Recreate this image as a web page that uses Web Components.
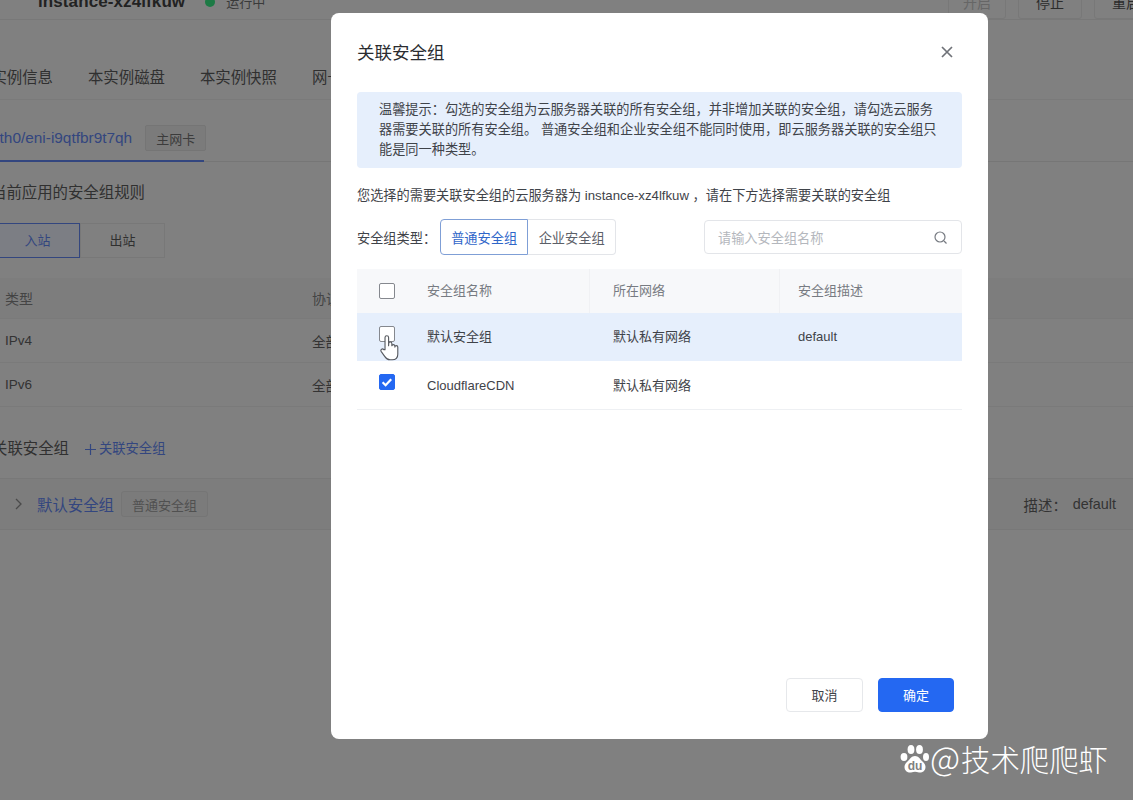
<!DOCTYPE html>
<html lang="zh">
<head>
<meta charset="utf-8">
<title>关联安全组</title>
<style>
  html, body { margin: 0; height: 100%; }
  body { width: 1133px; height: 800px; overflow: hidden; background: #808080; position: relative;
    font-family: "Liberation Sans", "Noto Sans CJK SC", sans-serif; }
</style>
</head>
<body>
<console-page></console-page>
<sg-dialog title="关联安全组">
  <sg-notice>温馨提示&#xFF1A;勾选的安全组为云服务器关联的所有安全组&#xFF0C;并非增加关联的安全组&#xFF0C;请勾选云服务器需要关联的所有安全组。 普通安全组和企业安全组不能同时使用&#xFF0C;即云服务器关联的安全组只能是同一种类型。</sg-notice>
  <sg-filter></sg-filter>
  <sg-table></sg-table>
  <sg-button slot="footer">取消</sg-button>
  <sg-button slot="footer" primary>确定</sg-button>
</sg-dialog>
<water-mark></water-mark>

<script>
const FONT = '"Liberation Sans", "Noto Sans CJK SC", sans-serif';

// dimmed page behind the dialog
class ConsolePage extends HTMLElement {
  constructor() {
    super();
    this.attachShadow({ mode: 'open' });
    this.shadowRoot.innerHTML = `
      <style>
        :host { display: block; width: 1133px; height: 800px; overflow: hidden; font-family: ${FONT}; font-size: 15.4px; color: #303030; }
        .head { display: flex; align-items: center; height: 36px; margin-top: -16px; padding-left: 38px; border-bottom: 1px solid #787878; box-sizing: border-box; }
        .name { font-size: 17px; font-weight: 700; color: #222; letter-spacing: .1px; }
        .dot { width: 10px; height: 10px; border-radius: 50%; background: #1d7a45; margin-left: 20px; }
        .state { margin-left: 11px; font-size: 13px; color: #3a3a3a; }
        .ops { margin-left: auto; display: flex; gap: 12px; margin-right: -25px; }
        .ops span { width: 64px; height: 34px; box-sizing: border-box; border: 1px solid #787878; border-radius: 3px; display: flex; align-items: center; justify-content: center; font-size: 14px; color: #2b2b2b; }
        .ops span.off { width: 58px; color: #666; }
        .tabs { display: flex; gap: 35px; margin: 44px 0 0 -24px; padding-top: 1px; height: 36px; border-bottom: 1px solid #7a7a7a; box-sizing: border-box; white-space: nowrap; }
        .sub { display: flex; align-items: center; height: 62px; margin-left: -9px; box-sizing: border-box; border-bottom: 1px solid #767676; padding-top: 16px; }
        .sub .on { display: flex; align-items: center; gap: 13px; height: 100%; border-bottom: 2px solid #33467f; box-sizing: border-box; margin-bottom: -1px; width: 213px; }
        .eth { white-space: nowrap; font-size: 15.4px; }
        .link { color: #33467f; }
        .tag { border: 1px solid #757575; background: #7b7b7b; border-radius: 2px; font-size: 13px; display: inline-flex; align-items: center; justify-content: center; color: #3c3c3c; flex: none; }
        .sub .tag { width: 59px; height: 24px; }
        .title { margin: 20px 0 0 -9px; line-height: 22px; }
        .dir { display: flex; margin: 19px 0 0 -5px; font-size: 13px; }
        .dir span { width: 85px; height: 35px; padding-bottom: 2px; box-sizing: border-box; display: flex; align-items: center; justify-content: center; border: 1px solid #787878; }
        .dir .on { border: 1px solid #33467f; color: #33467f; background: #7c7e84; }
        .row { display: grid; grid-template-columns: 312px 1fr; padding-left: 5px; box-sizing: border-box; align-items: center; height: 44px; border-bottom: 1px solid #7a7a7a; font-size: 13.5px; color: #333; }
        .row.th { height: 41px; margin-top: 20px; background: #7d7d7d; color: #444; font-size: 14px; }
        .row span:nth-child(2) { margin-left: -5px; }
        .sec { display: flex; align-items: center; gap: 16px; margin: 29px 0 0 -8px; line-height: 26px; }
        .sec .link { display: flex; align-items: center; gap: 3px; font-size: 13.3px; }
        .sec svg { width: 11px; height: 11px; }
        .group { display: flex; align-items: center; height: 52px; margin-top: 16px; padding: 0 17px 0 14px; background: #7d7d7d; border-top: 1px solid #787878; border-bottom: 1px solid #787878; box-sizing: border-box; }
        .group > svg { width: 9px; height: 12px; margin-right: 14px; }
        .group .tag { width: 85px; height: 24px; margin-left: 7px; border-radius: 3px; color: #505050; }
        .desc { margin-left: auto; font-size: 14.4px; color: #333; display: flex; align-items: center; gap: 6px; }
      </style>
      <div class="head">
        <span class="name">instance-xz4lfkuw</span><i class="dot"></i><span class="state">运行中</span>
        <div class="ops"><span class="off">开启</span><span>停止</span><span>重启</span></div>
      </div>
      <div class="tabs"><span>本实例信息</span><span>本实例磁盘</span><span>本实例快照</span><span>网卡信息</span></div>
      <div class="sub"><div class="on"><span class="link eth">eth0/eni-i9qtfbr9t7qh</span><span class="tag">主网卡</span></div></div>
      <div class="title">当前应用的安全组规则</div>
      <div class="dir"><span class="on">入站</span><span>出站</span></div>
      <div class="row th"><span>类型</span><span>协议</span></div>
      <div class="row"><span>IPv4</span><span>全部</span></div>
      <div class="row"><span>IPv6</span><span>全部</span></div>
      <div class="sec"><span>关联安全组</span><span class="link"><svg viewBox="0 0 11 11" stroke="#33467f" stroke-width="1.2"><path d="M5.500 0v11M0 5.500h11"/></svg>关联安全组</span></div>
      <div class="group">
        <svg viewBox="0 0 9 12" fill="none" stroke="#4a4a4a" stroke-width="1.3"><path d="M2 1l5 5-5 5"/></svg>
        <span class="link">默认安全组</span><span class="tag">普通安全组</span>
        <div class="desc"><span>描述&#xFF1A;</span><span>default</span></div>
      </div>`;
  }
}

class SgDialog extends HTMLElement {
  constructor() {
    super();
    this.attachShadow({ mode: 'open' });
    this.shadowRoot.innerHTML = `
      <style>
        :host { position: absolute; left: 331px; top: 13px; width: 657px; height: 726px; box-sizing: border-box; background: #fff; border-radius: 8px; display: flex; flex-direction: column; padding: 0 26px; font-family: ${FONT}; color: #33363d; }
        header { display: flex; align-items: center; justify-content: space-between; height: 79px; padding-bottom: 2px; box-sizing: border-box; flex: none; }
        h2 { margin: 0; font-size: 17.5px; font-weight: 400; color: #2a2c30; }
        svg { width: 14px; height: 14px; margin-right: 8px; }
        main { flex: 1; }
        footer { display: flex; justify-content: flex-end; gap: 15px; padding: 0 8px 27px 0; }
      </style>
      <header><h2></h2><svg viewBox="0 0 14 14" stroke="#6f7278" stroke-width="1.7" fill="none"><path d="M2 2l10 10M12 2L2 12"/></svg></header>
      <main><slot></slot></main>
      <footer><slot name="footer"></slot></footer>`;
  }
  connectedCallback() {
    this.shadowRoot.querySelector('h2').textContent = this.getAttribute('title');
    this.removeAttribute('title');
  }
}

class SgNotice extends HTMLElement {
  constructor() {
    super();
    this.attachShadow({ mode: 'open' });
    this.shadowRoot.innerHTML = `
      <style>
        :host { display: block; background: #e6effc; border-radius: 4px; padding: 8px 22px; height: 76px; box-sizing: border-box; font-size: 13.2px; line-height: 20px; color: #3f4349; }
      </style>
      <slot></slot>`;
  }
}

class SgFilter extends HTMLElement {
  constructor() {
    super();
    this.attachShadow({ mode: 'open' });
    this.shadowRoot.innerHTML = `
      <style>
        :host { display: block; font-size: 13.2px; color: #3f4349; }
        .to { height: 20px; line-height: 20px; margin-top: 18px; }
        .bar { display: flex; align-items: center; height: 36px; margin-top: 13px; }
        .seg { display: flex; margin-left: 4px; height: 36px; }
        .seg span { width: 88px; box-sizing: border-box; display: flex; align-items: center; justify-content: center; border: 1px solid #e3e5e9; color: #5c6068; }
        .seg .on { border-color: #7f9fd6; color: #2f66c9; border-radius: 4px 0 0 4px; }
        .seg span:last-child { border-left: 0; border-radius: 0 4px 4px 0; }
        .search { margin-left: auto; width: 258px; height: 34px; box-sizing: border-box; border: 1px solid #e3e5e9; border-radius: 4px; display: flex; align-items: center; justify-content: space-between; padding: 0 13px; color: #b4b7bd; }
        svg { width: 15px; height: 15px; }
      </style>
      <div class="to">您选择的需要关联安全组的云服务器为 instance-xz4lfkuw &#xFF0C;请在下方选择需要关联的安全组</div>
      <div class="bar">
        <span>安全组类型&#xFF1A;</span>
        <div class="seg"><span class="on">普通安全组</span><span>企业安全组</span></div>
        <div class="search"><span>请输入安全组名称</span>
          <svg viewBox="0 0 15 15" fill="none" stroke="#777b82" stroke-width="1.2"><circle cx="7" cy="7" r="5"/><path d="M11 11l2.500 2.500"/></svg>
        </div>
      </div>`;
  }
}

class SgCheck extends HTMLElement {
  constructor() {
    super();
    this.attachShadow({ mode: 'open' });
  }
  connectedCallback() {
    const on = this.hasAttribute('checked');
    this.shadowRoot.innerHTML = `
      <style>
        :host { display: block; width: 16px; height: 16px; box-sizing: border-box; border-radius: 2px; border: 1.4px solid ${on ? '#2468f2' : '#85888e'}; background: ${on ? '#2468f2' : '#fff'}; }
        svg { display: block; width: 100%; height: 100%; }
      </style>
      ${on ? '<svg viewBox="0 0 14 14" fill="none" stroke="#fff" stroke-width="2.2"><path d="M2.600 7.200l3 3 5.600-6"/></svg>' : ''}`;
  }
}

class SgTable extends HTMLElement {
  constructor() {
    super();
    this.attachShadow({ mode: 'open' });
    this.shadowRoot.innerHTML = `
      <style>
        :host { display: block; margin-top: 14px; font-size: 13px; color: #3f4349; }
        .row { display: grid; grid-template-columns: 70px 186px 185px 1fr; align-items: center; height: 49px; border-bottom: 1px solid #eef0f3; box-sizing: border-box; }
        .row > :first-child { justify-self: start; margin-left: 22px; }
        .row:last-child > :first-child { margin-top: -6px; }
        .th { height: 44px; background: #f7f8fa; border: 0; color: #777b82; }
        .th span { height: 44px; line-height: 44px; position: relative; }
        .th span + span::before { content: ""; position: absolute; left: -24px; top: 0; bottom: 0; width: 1px; background: #f0f1f4; }
        .th span:last-child::before { left: -19px; }
        .hover { background: #e6effc; height: 48px; border: 0; padding-bottom: 2px; }
        .cell-check { position: relative; margin-top: -4px; }
        .cn { padding-bottom: 2px; }
        svg.hand { position: absolute; left: -1px; top: 8px; width: 23px; height: 28px; }
      </style>
      <div class="row th"><sg-check></sg-check><span>安全组名称</span><span>所在网络</span><span>安全组描述</span></div>
      <div class="row hover">
        <div class="cell-check"><sg-check></sg-check>
          <svg class="hand" viewBox="0 0 19 25" fill="#fff" stroke="#55585e" stroke-width="1" stroke-linejoin="round"><path d="M5.500 14V3.200a1.600 1.600 0 0 1 3.200 0V10.500l.1-2a1.400 1.400 0 0 1 2.800 0v2a1.400 1.400 0 0 1 2.700 0v1.200a1.300 1.300 0 0 1 2.600 0v6.300c0 3-1.800 5-5 5H10c-2.500 0-3.600-1-4.800-3L2 15.500c-1-1.700 1.300-3 2.400-1.500z"/></svg>
        </div>
        <span class="cn">默认安全组</span><span class="cn">默认私有网络</span><span>default</span></div>
      <div class="row"><sg-check checked></sg-check><span>CloudflareCDN</span><span class="cn">默认私有网络</span><span></span></div>`;
  }
}

class SgButton extends HTMLElement {
  constructor() {
    super();
    this.attachShadow({ mode: 'open' });
    this.shadowRoot.innerHTML = `
      <style>
        :host { display: flex; align-items: center; justify-content: center; width: 77px; height: 34px; padding-bottom: 2px; box-sizing: border-box; border: 1px solid #e6e8eb; border-radius: 4px; font-size: 13px; color: #3f4349; background: #fff; }
        :host([primary]) { width: 76px; background: #2468f2; border-color: #2468f2; color: #fff; }
      </style>
      <slot></slot>`;
  }
}

class WaterMark extends HTMLElement {
  constructor() {
    super();
    this.attachShadow({ mode: 'open' });
    this.shadowRoot.innerHTML = `
      <style>
        :host { position: absolute; left: 900px; top: 737px; display: flex; align-items: center; gap: 1px; height: 42px; color: #fff; font-family: "Noto Sans CJK SC", sans-serif; font-size: 29.4px; font-weight: 300; white-space: nowrap; }
        svg { width: 29px; height: 30px; margin-top: 2px; }
        .at { font-size: 33px; line-height: 1; margin-right: 1px; }
        .du { font: 700 12px "Liberation Sans", sans-serif; fill: #808080; }
      </style>
      <svg viewBox="0 0 29 30" fill="#fff">
        <ellipse cx="4" cy="13" rx="3.400" ry="4"/><ellipse cx="11" cy="5.500" rx="3.400" ry="4.500"/><ellipse cx="19.500" cy="5.500" rx="3.400" ry="4.500"/><ellipse cx="26" cy="13" rx="3" ry="4"/>
        <path d="M15 12c3.500 0 5 3 7 5 2.500 2.300 3.500 4 3.500 6 0 4-3.500 6-6.500 5.500-1.500-.3-2.800-.8-4-.8s-2.500.5-4 .8C8 29 4.500 27 4.500 23c0-2 1-3.700 3.500-6 2-2 3.500-5 7-5z"/>
        <text class="du" x="15" y="26" text-anchor="middle">du</text>
      </svg>
      <span><span class="at">@</span>技术爬爬虾</span>`;
  }
}

customElements.define('console-page', ConsolePage);
customElements.define('sg-dialog', SgDialog);
customElements.define('sg-notice', SgNotice);
customElements.define('sg-filter', SgFilter);
customElements.define('sg-check', SgCheck);
customElements.define('sg-table', SgTable);
customElements.define('sg-button', SgButton);
customElements.define('water-mark', WaterMark);
</script>
</body>
</html>
